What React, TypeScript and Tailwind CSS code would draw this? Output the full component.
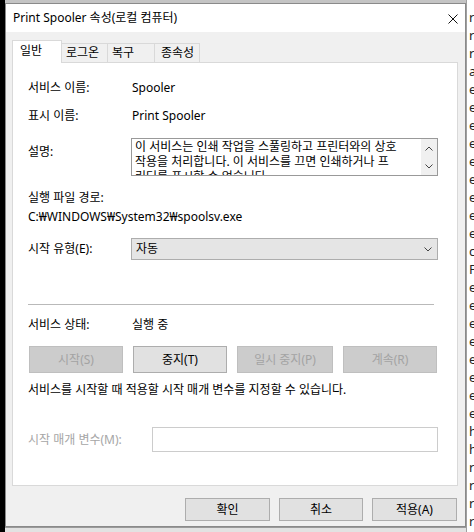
import React from 'react';

// Windows "Print Spooler 속성" 대화 상자 (일반 탭)

const FONT = "'Noto Sans','Noto Sans CJK KR',sans-serif";

const BG_LETTERS = ['r', 'r', 'r', 'a', 'e', 'e', 'e', 'e', 'e', 'e', 'e', 'e', 'e', 'c', 'F', 'e', 'e', 'e', 'e', 'e', 'e', 'e', 'e', 'h', 'h', 'r', 'r', 'r', 'r', 'r'];

function Chevron({ up = false }: { up?: boolean }) {
  return (
    <svg width="8" height="5" viewBox="0 0 8 5" className="block">
      <path d={up ? 'M0.5 4.5 L4 1 L7.5 4.5' : 'M0.5 0.5 L4 4 L7.5 0.5'} fill="none" stroke="#444" strokeWidth="1" />
    </svg>
  );
}

function Btn({ label, w, disabled = false, h = 'h-[27px]' }: { label: string; w: string; disabled?: boolean; h?: string }) {
  return (
    <div
      className={`${w} ${h} flex items-center justify-center border text-[12px] leading-4 ${
        disabled ? 'border-[#bfbfbf] bg-[#cccccc] text-[#a3a3a3]' : 'border-[#adadad] bg-[#e1e1e1] text-black'
      }`}
    >
      {label}
    </div>
  );
}

function Row({ label, children }: { label: string; children: React.ReactNode }) {
  return (
    <div className="flex h-4 items-center">
      <div className="w-[104px] shrink-0">{label}</div>
      <div>{children}</div>
    </div>
  );
}

export default function App() {
  return (
    <div className="flex h-[532px] w-[474px] overflow-hidden bg-black text-[12px] leading-4 text-black" style={{ fontFamily: FONT }}>
      {/* 뒤쪽 창 왼쪽 가장자리 */}
      <div className="w-[5px] shrink-0 bg-black" />

      <div className="flex w-[461px] shrink-0 flex-col bg-[#e6e6e6]">
        <div className="h-[3px] shrink-0 bg-[#c4c4c4]" />

        {/* 대화 상자 */}
        <div className="flex h-[524px] shrink-0 flex-col border border-[#8a8a8a] bg-[#f0f0f0]">
          {/* 제목 표시줄 */}
          <div className="flex h-[28px] shrink-0 items-center justify-between bg-white pl-[7px] pr-[7px]">
            <span className="text-[12px]">Print Spooler 속성(로컬 컴퓨터)</span>
            <svg width="10" height="10" viewBox="0 0 10 10" className="mt-[2px]">
              <path d="M0.5 0.5 L9.5 9.5 M9.5 0.5 L0.5 9.5" stroke="#111" strokeWidth="1" />
            </svg>
          </div>

          <div className="flex flex-1 flex-col pl-[6px] pr-[4px] pt-[8px]">
            {/* 탭 */}
            <div className="relative z-10 flex h-[22px] items-end">
              <div className="-mb-px flex h-[23px] w-[50px] items-center border border-b-0 border-[#d9d9d9] bg-white pb-[2px] pl-[7px]">
                일반
              </div>
              <div className="flex h-[19px] w-[46px] items-center border-r border-t border-[#d9d9d9] bg-[#f0f0f0] pl-[4px]">
                로그온
              </div>
              <div className="flex h-[19px] w-[47px] items-center border-r border-t border-[#d9d9d9] bg-[#f0f0f0] pl-[4px]">
                복구
              </div>
              <div className="flex h-[19px] w-[45px] items-center border-r border-t border-[#d9d9d9] bg-[#f0f0f0] pl-[6px]">
                종속성
              </div>
            </div>

            {/* 탭 패널 */}
            <div className="flex h-[424px] w-[446px] flex-col border border-[#d9d9d9] bg-white pl-[15px]">
              <div className="mt-[17px]">
                <Row label="서비스 이름:">Spooler</Row>
              </div>
              <div className="mt-[12px]">
                <Row label="표시 이름:">Print Spooler</Row>
              </div>

              <div className="mt-[14px] flex">
                <div className="mt-[6px] w-[103px] shrink-0">설명:</div>
                <div className="flex h-[38px] w-[307px] border border-[#999999]">
                  <div className="flex-1 overflow-hidden pl-[3px] leading-[15px]">
                    <div className="whitespace-nowrap">이 서비스는 인쇄 작업을 스풀링하고 프린터와의 상호</div>
                    <div className="whitespace-nowrap">작용을 처리합니다. 이 서비스를 끄면 인쇄하거나 프</div>
                    <div className="whitespace-nowrap">린터를 표시할 수 없습니다.</div>
                  </div>
                  <div className="flex w-[16px] flex-col items-center justify-between bg-[#f0f0f0] pb-[6px] pt-[7px]">
                    <Chevron up />
                    <Chevron />
                  </div>
                </div>
              </div>

              <div className="mt-[14px] h-4">실행 파일 경로:</div>
              <div className="mt-[3px] h-4">C:₩WINDOWS₩System32₩spoolsv.exe</div>

              <div className="mt-[13px] flex items-center">
                <div className="w-[103px] shrink-0">시작 유형(E):</div>
                <div className="flex h-[22px] w-[307px] items-center justify-between border border-[#adadad] bg-[#e5e5e5] pl-[4px] pr-[5px]">
                  <span>자동</span>
                  <Chevron />
                </div>
              </div>

              <div className="mt-[44px] h-px w-[406px] bg-[#b9b9b9]" />

              <div className="mt-[12px]">
                <Row label="서비스 상태:">실행 중</Row>
              </div>

              <div className="ml-px mt-[13px] flex w-[408px] justify-between">
                <Btn label="시작(S)" w="w-[94px]" disabled />
                <Btn label="중지(T)" w="w-[94px]" />
                <Btn label="일시 중지(P)" w="w-[96px]" disabled />
                <Btn label="계속(R)" w="w-[94px]" disabled />
              </div>

              <div className="mt-[9px] h-4 whitespace-nowrap">서비스를 시작할 때 적용할 시작 매개 변수를 지정할 수 있습니다.</div>

              <div className="mt-[29px] flex items-center">
                <div className="w-[124px] shrink-0 text-[#a6a6a6]">시작 매개 변수(M):</div>
                <div className="h-[25px] w-[286px] border border-[#cccccc] bg-white" />
              </div>
            </div>

            {/* 확인 / 취소 / 적용 */}
            <div className="mt-[12px] flex justify-end gap-[9px] pr-[4px]">
              <Btn label="확인" w="w-[85px]" h="h-[23px]" />
              <Btn label="취소" w="w-[84px]" h="h-[23px]" />
              <Btn label="적용(A)" w="w-[85px]" h="h-[23px]" />
            </div>
          </div>
        </div>

        <div className="flex-1 border-t border-[#9a9a9a] bg-[#e2e2e2]" />
      </div>

      {/* 뒤쪽 창 오른쪽 가장자리 */}
      <div className="flex w-[8px] shrink-0 flex-col overflow-hidden border-l border-[#a0a0a0] bg-white pl-[2px] pt-[8px] text-[13px] leading-[18px] text-[#222]">
        {BG_LETTERS.map((c, i) => (
          <div key={i}>{c}</div>
        ))}
      </div>
    </div>
  );
}
